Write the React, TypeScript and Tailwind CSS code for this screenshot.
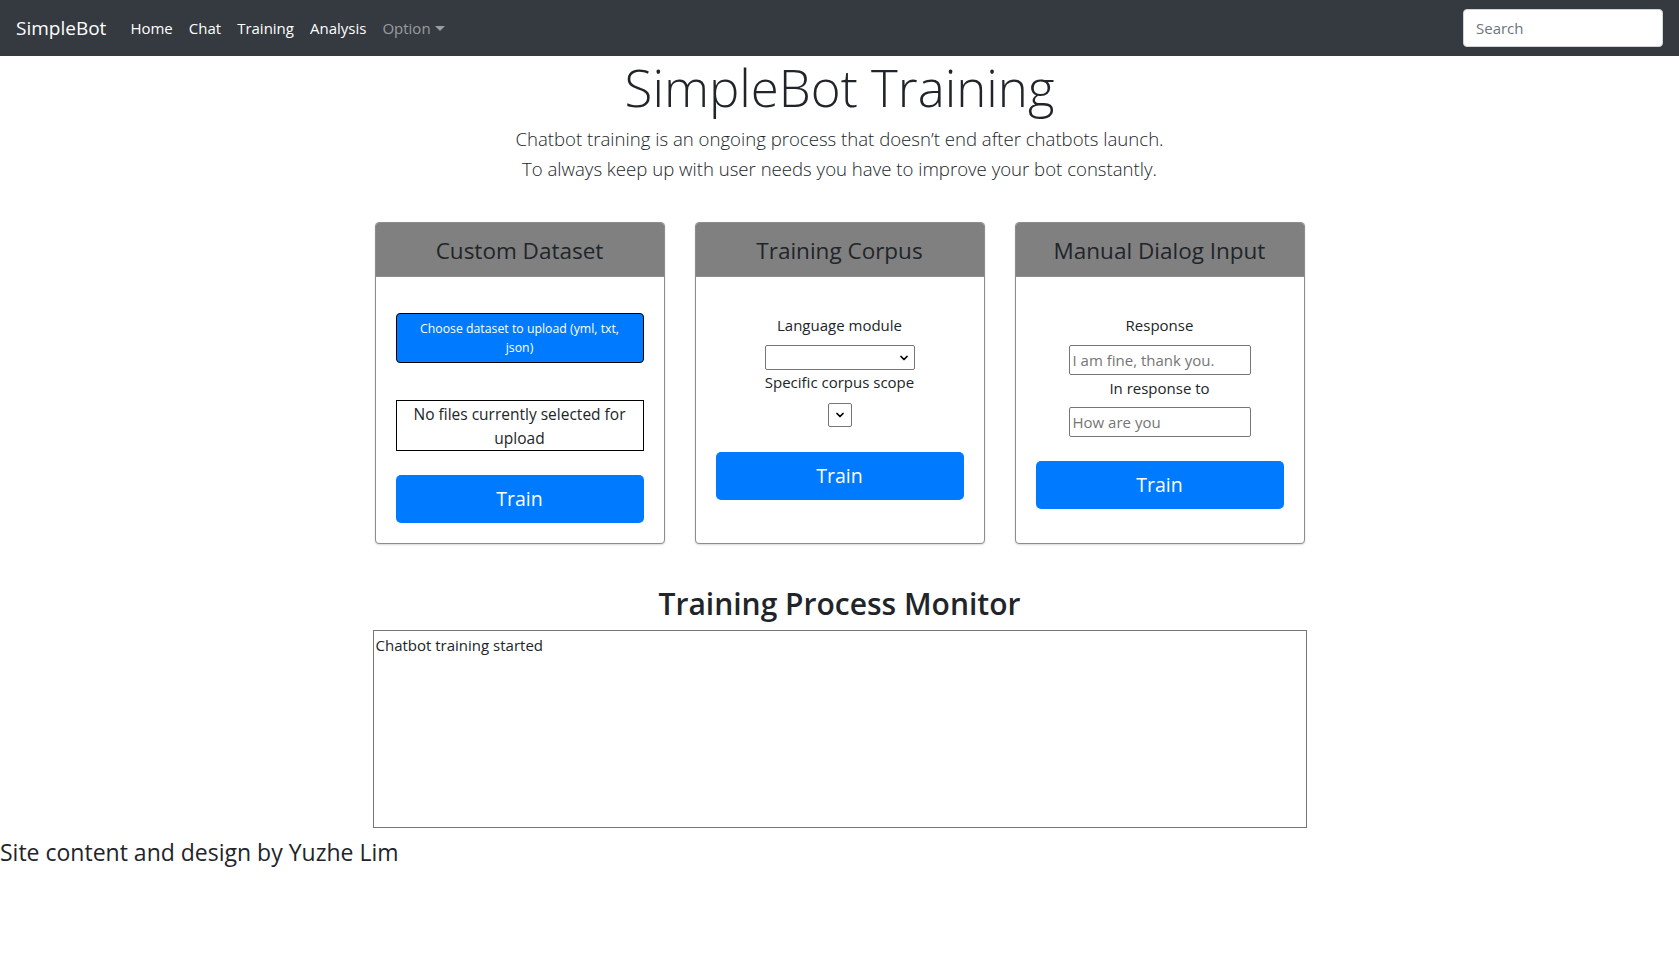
import { ChevronDown } from "lucide-react";

const font = { fontFamily: '"Open Sans", "Noto Sans", sans-serif' };

function Chevron() {
  return <ChevronDown className="h-3 w-3 text-black" strokeWidth={3.5} />;
}

function CardShell({ title, children }: { title: string; children: React.ReactNode }) {
  return (
    <div className="flex h-[322px] w-[290px] flex-col overflow-hidden rounded-[4px] border border-[#8c8c8c] bg-white shadow-[0_1px_2px_rgba(0,0,0,0.15)]">
      <div className="flex h-[54px] items-center justify-center border-b border-[#8c8c8c] bg-[#808080] pt-[2px] text-[22.5px] text-[#212529]">
        {title}
      </div>
      <div className="flex flex-1 flex-col items-center px-5">{children}</div>
    </div>
  );
}

function TrainButton() {
  return (
    <button className="h-[48px] w-full rounded-[5px] bg-[#007bff] text-[19.5px] text-white">
      Train
    </button>
  );
}

export default function App() {
  return (
    <div className="min-h-[959px] bg-white text-[#212529]" style={font}>
      <nav className="flex h-[56px] items-center bg-[#343a40] px-4">
        <span className="mr-[16px] text-[19px] text-white">SimpleBot</span>
        <div className="flex items-center text-[15px]">
          <span className="px-2 text-white">Home</span>
          <span className="px-2 text-white">Chat</span>
          <span className="px-2 text-white">Training</span>
          <span className="px-2 text-white">Analysis</span>
          <span className="flex items-center px-2 text-white/50">
            Option
            <span className="ml-1 border-x-[5px] border-t-[5px] border-x-transparent border-t-white/50" />
          </span>
        </div>
        <div className="ml-auto flex h-[38px] w-[200px] items-center rounded-[4px] border border-[#ced4da] bg-white px-3 text-[15px] text-[#6c757d]">
          Search
        </div>
      </nav>

      <div className="text-center">
        <h1 className="text-[51px] leading-[62px] font-light">SimpleBot Training</h1>
        <p className="mt-[6px] text-[18.6px] leading-[30px] font-light">
          Chatbot training is an ongoing process that doesn’t end after chatbots launch.
          <br />
          To always keep up with user needs you have to improve your bot constantly.
        </p>
      </div>

      <div className="mx-auto mt-[38px] flex w-[932px] justify-center gap-[30px]">
        <CardShell title="Custom Dataset">
          <button className="mt-[36px] h-[50px] w-full rounded-[4px] border border-black bg-[#007bff] px-5 text-[12.3px] leading-[19px] text-white">
            Choose dataset to upload (yml, txt, json)
          </button>
          <div className="mt-[37px] flex h-[51px] w-full items-center justify-center border border-black px-4 text-center text-[15.5px] leading-[24px]">
            No files currently selected for upload
          </div>
          <div className="mt-[24px] w-full">
            <TrainButton />
          </div>
        </CardShell>

        <CardShell title="Training Corpus">
          <div className="mt-[36px] text-[15px] leading-[24px]">Language module</div>
          <div className="mt-[8px] flex h-[25px] w-[150px] items-center justify-end rounded-[2px] border border-[#767676] pr-1">
            <Chevron />
          </div>
          <div className="text-[15px] leading-[24px]">Specific corpus scope</div>
          <div className="mt-[9px] flex h-[24px] w-[24px] items-center justify-center rounded-[2px] border border-[#767676]">
            <Chevron />
          </div>
          <div className="mt-[25px] w-full">
            <TrainButton />
          </div>
        </CardShell>

        <CardShell title="Manual Dialog Input">
          <div className="mt-[36px] text-[15px] leading-[24px]">Response</div>
          <div className="mt-[8px] flex h-[30px] w-[182px] items-center rounded-[2px] border border-[#767676] px-[3px] text-[15px] text-[#757575]">
            I am fine, thank you.
          </div>
          <div className="mt-[1px] text-[15px] leading-[24px]">In response to</div>
          <div className="mt-[7px] flex h-[30px] w-[182px] items-center rounded-[2px] border border-[#767676] px-[3px] text-[15px] text-[#757575]">
            How are you
          </div>
          <div className="mt-[24px] w-full">
            <TrainButton />
          </div>
        </CardShell>
      </div>

      <h2 className="mt-[41px] text-center text-[30px] leading-[38px] font-semibold">
        Training Process Monitor
      </h2>
      <div className="mx-auto mt-[7px] h-[198px] w-[934px] border border-[#767676] px-[2px] py-[3px] text-[15px] leading-[22px]">
        Chatbot training started
      </div>
      <div className="mt-[10px] text-[23px] leading-[29px]">Site content and design by Yuzhe Lim</div>
    </div>
  );
}
